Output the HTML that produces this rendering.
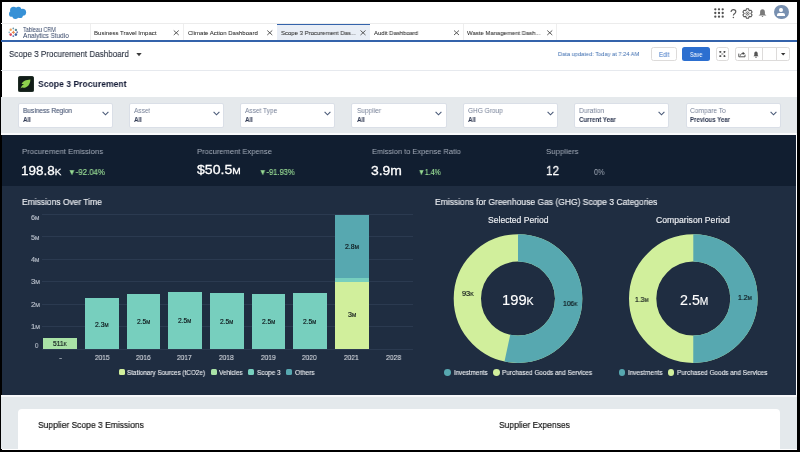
<!DOCTYPE html>
<html><head><meta charset="utf-8">
<style>
*{margin:0;padding:0;box-sizing:border-box}
html,body{width:800px;height:452px;overflow:hidden;background:#000;font-family:"Liberation Sans",sans-serif;line-height:1}
.a{position:absolute;white-space:nowrap}
.t{transform-origin:0 0;will-change:transform;-webkit-text-stroke-width:0.15px}
.xi{position:absolute;width:5px;height:5px}
.fb{position:absolute;top:102.8px;width:95.3px;height:25.4px;background:#fff;border:1px solid #dadfe7;border-radius:2px}
.fc{position:absolute;left:83px;top:7.3px}
.gl{position:absolute;left:41.5px;width:371px;height:1px;background:#2b3a50}
.bar{position:absolute;width:33.7px}
.sq{position:absolute;width:6.2px;height:6px;border-radius:1.5px}
.dot{position:absolute;width:6.8px;height:6.8px;border-radius:50%}
</style></head><body>
<div class="a" style="left:1.5px;top:1.5px;width:795.5px;height:448px;background:#fff"></div>

<!-- HEADER -->
<svg class="a" style="left:0;top:0" width="32" height="24" viewBox="0 0 32 24">
 <g fill="#3791d6"><circle cx="13.6" cy="10.3" r="3.5"/><circle cx="18.4" cy="9.7" r="2.9"/><circle cx="22.6" cy="12.3" r="3.5"/><circle cx="11.9" cy="13.9" r="2.9"/><circle cx="15.4" cy="15.9" r="3"/><circle cx="20" cy="15.2" r="2.9"/><rect x="12" y="10" width="10" height="6"/></g>
</svg>
<div class="a" style="left:1px;top:23px;width:796px;height:1px;background:#ececec"></div>
<svg class="a" style="left:713.8px;top:7.8px" width="10" height="10" viewBox="0 0 10 10"><g fill="#505050"><circle cx="1.3" cy="1.3" r="1.15"/><circle cx="5.0" cy="1.3" r="1.15"/><circle cx="8.7" cy="1.3" r="1.15"/><circle cx="1.3" cy="5.0" r="1.15"/><circle cx="5.0" cy="5.0" r="1.15"/><circle cx="8.7" cy="5.0" r="1.15"/><circle cx="1.3" cy="8.7" r="1.15"/><circle cx="5.0" cy="8.7" r="1.15"/><circle cx="8.7" cy="8.7" r="1.15"/></g></svg>
<svg class="a" style="left:729.5px;top:8.5px" width="7" height="10" viewBox="0 0 7 10"><path d="M1.1 2.9 C1.1 1.5 2.1 0.7 3.4 0.7 C4.8 0.7 5.8 1.6 5.8 2.8 C5.8 4 4.9 4.4 4.1 5 C3.6 5.4 3.4 5.8 3.4 6.6" stroke="#5c5c5c" stroke-width="1.2" fill="none"/><circle cx="3.4" cy="8.5" r="0.75" fill="#5c5c5c"/></svg>
<svg class="a" style="left:741.9px;top:7.5px" width="11" height="11" viewBox="0 0 11 11">
<path d="M4.50 0.80 L6.50 0.80 L7.15 2.64 L9.07 2.29 L10.07 4.02 L8.80 5.50 L10.07 6.98 L9.07 8.71 L7.15 8.36 L6.50 10.20 L4.50 10.20 L3.85 8.36 L1.93 8.71 L0.93 6.98 L2.20 5.50 L0.93 4.02 L1.93 2.29 L3.85 2.64 Z" fill="none" stroke="#5a5a5a" stroke-width="1.1" stroke-linejoin="round"/>
<circle cx="5.5" cy="5.5" r="1.6" fill="none" stroke="#5a5a5a" stroke-width="0.9"/><path d="M4.7 5.5 L6 4.8 L6 6.2 Z" fill="#5a5a5a"/></svg>
<svg class="a" style="left:757.7px;top:9px" width="9" height="8.5" viewBox="0 0 9 8.5"><path d="M4.5 0.3 C2.9 0.3 2.1 1.5 2.1 3.2 L2.1 5.2 L0.5 6.6 L8.5 6.6 L6.9 5.2 L6.9 3.2 C6.9 1.5 6.1 0.3 4.5 0.3 Z" fill="#7a7a7a"/><path d="M3.7 7 L5.3 7 C5.3 7.7 5 8 4.5 8 C4 8 3.7 7.7 3.7 7 Z" fill="#7a7a7a"/></svg>
<div class="a" style="left:774.2px;top:4.9px;width:14.6px;height:14.6px;border-radius:50%;background:#7890b0;overflow:hidden">
 <div class="a" style="left:5px;top:2.8px;width:4px;height:4.4px;border-radius:50%;background:#fff"></div>
 <div class="a" style="left:3.2px;top:7.8px;width:7.6px;height:3.2px;border-radius:2px 2px 0 0;background:#fff"></div>
</div>

<!-- TABS -->
<svg class="a" style="left:0;top:0" width="24" height="40" viewBox="0 0 24 40">
<path d="M13.4 30.3 L14 31.7 L15.4 32.3 L14 32.9 L13.4 34.3 L12.8 32.9 L11.4 32.3 L12.8 31.7 Z" fill="#e8894a"/>
<circle cx="13.4" cy="32.3" r="0.9" fill="#e8894a"/>
<circle cx="13.3" cy="28.4" r="0.85" fill="#6e98a8"/>
<circle cx="10.7" cy="29.8" r="1.2" fill="#eea35a"/>
<circle cx="15.9" cy="29.9" r="1.2" fill="#5e8c95"/>
<circle cx="9.2" cy="32.3" r="0.85" fill="#8fbccc"/>
<circle cx="17.2" cy="32.3" r="0.95" fill="#7a83b8"/>
<circle cx="10.7" cy="34.6" r="1.3" fill="#d9465e"/>
<circle cx="15.9" cy="34.6" r="1.3" fill="#3d5f9c"/>
<circle cx="13.3" cy="36.1" r="0.95" fill="#5a74b0"/>
</svg>
<div class="a" style="left:90px;top:24px;width:1px;height:16px;background:#eeeeee"></div>
<div class="a" style="left:183px;top:24px;width:1px;height:16px;background:#eeeeee"></div>
<div class="a" style="left:276.5px;top:24px;width:93.5px;height:16px;background:#e9eef6;border-top:1.7px solid #3463ab"></div>
<div class="a" style="left:463px;top:24px;width:1px;height:16px;background:#eeeeee"></div>
<div class="a" style="left:555.6px;top:24px;width:1px;height:16px;background:#eeeeee"></div>
<svg class="a" style="left:0;top:0" width="800" height="45">
 <g stroke="#4a4a4a" stroke-width="0.9" fill="none">
  <path d="M173.75 30.5 L178.75 35 M178.75 30.5 L173.75 35"/>
  <path d="M267.25 30.5 L272.25 35 M272.25 30.5 L267.25 35"/>
  <path d="M360.5 30.5 L365.5 35 M365.5 30.5 L360.5 35"/>
  <path d="M454 30.5 L459 35 M459 30.5 L454 35"/>
  <path d="M547.25 30.5 L552.25 35 M552.25 30.5 L547.25 35"/>
 </g>
</svg>
<div class="a" style="left:1px;top:40px;width:796px;height:2px;background:#3463ab"></div>

<!-- DASH HEADER -->
<svg class="a" style="left:135.5px;top:52.5px" width="6" height="4" viewBox="0 0 6 4"><path d="M0.3 0 L5.7 0 L3 3.3 Z" fill="#3c3c3c"/></svg>
<div class="a" style="left:651px;top:47px;width:25.5px;height:14px;border:1px solid #dddbda;border-radius:2.5px;background:#fff"></div>
<div class="a" style="left:682px;top:47px;width:27.5px;height:14px;border-radius:2.5px;background:#2c6fd0"></div>
<div class="a" style="left:715.5px;top:47px;width:13.5px;height:14px;border:1px solid #dddbda;border-radius:2.5px;background:#fff"></div>
<svg class="a" style="left:716px;top:48px" width="13" height="12" viewBox="0 0 13 12"><path d="M4 3.5 L8.8 8.5 M8.8 3.5 L4 8.5" stroke="#888" stroke-width="0.6"/>
<g fill="#2a2a2a"><path d="M3.4 3 L5.6 3.4 L3.8 5.2 Z"/><path d="M9.4 3 L7.2 3.4 L9 5.2 Z"/><path d="M3.4 9 L5.6 8.6 L3.8 6.8 Z"/><path d="M9.4 9 L7.2 8.6 L9 6.8 Z"/></g></svg>
<div class="a" style="left:735px;top:47px;width:55px;height:14px;border:1px solid #dddbda;border-radius:2.5px;background:#fff"></div>
<div class="a" style="left:747.7px;top:47px;width:1px;height:14px;background:#dddbda"></div>
<div class="a" style="left:761.5px;top:47px;width:1px;height:14px;background:#dddbda"></div>
<div class="a" style="left:776px;top:47px;width:1px;height:14px;background:#dddbda"></div>
<svg class="a" style="left:738px;top:51px" width="8" height="6.5" viewBox="0 0 8 6.5"><path d="M0.8 2.6 L0.8 5.8 L7 5.8 L7 3.6" stroke="#444" stroke-width="0.9" fill="none"/><path d="M2.4 4.6 C2.6 3.1 3.5 2.4 5 2.4" stroke="#444" stroke-width="0.9" fill="none"/><path d="M4.7 0.8 L7 2.4 L4.7 4 Z" fill="#444"/></svg>
<svg class="a" style="left:752.5px;top:50.5px" width="6" height="7" viewBox="0 0 6 7"><path d="M3 0.4 C1.7 0.4 1.3 1.5 1.3 2.6 L1.3 4.2 L0.4 5.3 L5.6 5.3 L4.7 4.2 L4.7 2.6 C4.7 1.5 4.3 0.4 3 0.4 Z" fill="#555"/><circle cx="3" cy="6.2" r="0.7" fill="#555"/></svg>
<svg class="a" style="left:781.3px;top:53px" width="4.4" height="3" viewBox="0 0 4.4 3"><path d="M0 0 L4.4 0 L2.2 2.6 Z" fill="#333"/></svg>
<div class="a" style="left:1px;top:70px;width:796px;height:1px;background:#e6e9ee"></div>

<!-- TITLE -->
<div class="a" style="left:17.5px;top:76px;width:16.3px;height:16px;border-radius:2.5px;background:#121d18;box-shadow:inset 0 0 0 0.6px #2a3a30"></div>
<svg class="a" style="left:0;top:0" width="40" height="96" viewBox="0 0 40 96"><path d="M30.4 79.4 C26.2 79.6 22.4 81.2 21.6 84.1 C22.5 83.8 23.4 83.9 23.8 84.3 C22.8 84.7 21.9 85.6 21.3 86.8 L20.5 88.4 L21.9 87.5 C26.2 88.4 30.2 85.6 30.4 79.4 Z" fill="#8fd14d"/></svg>

<!-- FILTER BAND -->
<div class="a" style="left:1px;top:96.5px;width:796px;height:37px;background:#e5e9ec"></div>
<div class="a" style="left:1px;top:133px;width:796px;height:2px;background:#fafbfc"></div>
<div class="fb" style="left:17.5px"><svg class="fc" width="7" height="5" viewBox="0 0 7 5"><path d="M0.6 0.8 L3.5 3.8 L6.4 0.8" stroke="#4a5a78" stroke-width="1.1" fill="none"/></svg></div>
<div class="fb" style="left:128.6px"><svg class="fc" width="7" height="5" viewBox="0 0 7 5"><path d="M0.6 0.8 L3.5 3.8 L6.4 0.8" stroke="#4a5a78" stroke-width="1.1" fill="none"/></svg></div>
<div class="fb" style="left:239.7px"><svg class="fc" width="7" height="5" viewBox="0 0 7 5"><path d="M0.6 0.8 L3.5 3.8 L6.4 0.8" stroke="#4a5a78" stroke-width="1.1" fill="none"/></svg></div>
<div class="fb" style="left:351.4px"><svg class="fc" width="7" height="5" viewBox="0 0 7 5"><path d="M0.6 0.8 L3.5 3.8 L6.4 0.8" stroke="#4a5a78" stroke-width="1.1" fill="none"/></svg></div>
<div class="fb" style="left:462.8px"><svg class="fc" width="7" height="5" viewBox="0 0 7 5"><path d="M0.6 0.8 L3.5 3.8 L6.4 0.8" stroke="#4a5a78" stroke-width="1.1" fill="none"/></svg></div>
<div class="fb" style="left:573.5px"><svg class="fc" width="7" height="5" viewBox="0 0 7 5"><path d="M0.6 0.8 L3.5 3.8 L6.4 0.8" stroke="#4a5a78" stroke-width="1.1" fill="none"/></svg></div>
<div class="fb" style="left:685.5px"><svg class="fc" width="7" height="5" viewBox="0 0 7 5"><path d="M0.6 0.8 L3.5 3.8 L6.4 0.8" stroke="#4a5a78" stroke-width="1.1" fill="none"/></svg></div>

<!-- KPI BAND -->
<div class="a" style="left:2px;top:135px;width:794px;height:50.5px;background:#111e30"></div>

<!-- CHART AREA -->
<div class="a" style="left:2px;top:185.5px;width:794px;height:209px;background:#1f2d41"></div>
<div class="gl" style="top:214px"></div>
<div class="gl" style="top:236px"></div>
<div class="gl" style="top:259px"></div>
<div class="gl" style="top:281px"></div>
<div class="gl" style="top:304px"></div>
<div class="gl" style="top:326px"></div>
<div class="gl" style="top:349px"></div>
<div class="bar" style="left:43.2px;top:337.8px;height:11.5px;background:#a9e2a6"></div>
<div class="bar" style="left:84.9px;top:298.1px;height:51.2px;background:#77cfbe"></div>
<div class="bar" style="left:126.6px;top:294px;height:55.3px;background:#77cfbe"></div>
<div class="bar" style="left:168.2px;top:292.4px;height:56.9px;background:#77cfbe"></div>
<div class="bar" style="left:209.9px;top:292.9px;height:56.4px;background:#77cfbe"></div>
<div class="bar" style="left:251.6px;top:294px;height:55.3px;background:#77cfbe"></div>
<div class="bar" style="left:293.2px;top:293.4px;height:55.9px;background:#77cfbe"></div>
<div class="bar" style="left:334.9px;top:215px;height:63.3px;background:#57a8b0"></div>
<div class="bar" style="left:334.9px;top:278.3px;height:3.5px;background:#77cfbe"></div>
<div class="bar" style="left:334.9px;top:281.8px;height:67.5px;background:#d1ef9c"></div>
<div class="sq" style="left:119px;top:368.9px;background:#d1ef9c"></div>
<div class="sq" style="left:211.2px;top:368.9px;background:#a9e2a6"></div>
<div class="sq" style="left:248.3px;top:368.9px;background:#77cfbe"></div>
<div class="sq" style="left:286px;top:368.9px;background:#57a8b0"></div>

<svg class="a" style="left:0;top:0" width="800" height="452">
 <g transform="translate(518,298.6) rotate(-90)">
  <circle r="50.65" fill="none" stroke="#d1ef9c" stroke-width="27.3"/>
  <circle r="50.65" fill="none" stroke="#57a8b0" stroke-width="27.3" stroke-dasharray="169.6 400"/>
 </g>
 <g transform="translate(693.3,298.6) rotate(-90)">
  <circle r="50.65" fill="none" stroke="#d1ef9c" stroke-width="27.3"/>
  <circle r="50.65" fill="none" stroke="#57a8b0" stroke-width="27.3" stroke-dasharray="158.9 400"/>
 </g>
</svg>
<div class="dot" style="left:444.4px;top:369.1px;background:#57a8b0"></div>
<div class="dot" style="left:492.9px;top:369.1px;background:#d1ef9c"></div>
<div class="dot" style="left:618.6px;top:369.1px;background:#57a8b0"></div>
<div class="dot" style="left:667.7px;top:369.1px;background:#d1ef9c"></div>

<!-- BOTTOM -->
<div class="a" style="left:1px;top:394.6px;width:796px;height:2.2px;background:#f7f8fa"></div>
<div class="a" style="left:1px;top:396.8px;width:796px;height:52.2px;background:#e4e9ec"></div>
<div class="a" style="left:18px;top:408.6px;width:762px;height:50px;background:#fff;border-radius:4px"></div>

<div class="a t" style="left:22.90px;top:26.70px;font-size:6.3px;transform:scaleX(0.858);color:#2e3f62;-webkit-text-stroke-width:0">Tableau CRM</div>
<div class="a t" style="left:22.80px;top:32.50px;font-size:6.6px;transform:scaleX(0.977);color:#2e3f62;-webkit-text-stroke-width:0">Analytics Studio</div>
<div class="a t" style="left:93.75px;top:29.90px;font-size:6.0px;transform:scaleX(1.008);color:#2a2a2a;-webkit-text-stroke-width:0.05px">Business Travel Impact</div>
<div class="a t" style="left:187.50px;top:29.90px;font-size:6.0px;transform:scaleX(1.006);color:#2a2a2a;-webkit-text-stroke-width:0.05px">Climate Action Dashboard</div>
<div class="a t" style="left:281.25px;top:29.90px;font-size:6.0px;transform:scaleX(0.993);color:#2a2a2a;-webkit-text-stroke-width:0.05px">Scope 3 Procurement Das...</div>
<div class="a t" style="left:374.40px;top:29.90px;font-size:6.0px;transform:scaleX(0.986);color:#2a2a2a;-webkit-text-stroke-width:0.05px">Audit Dashboard</div>
<div class="a t" style="left:467.25px;top:29.90px;font-size:6.0px;transform:scaleX(0.991);color:#2a2a2a;-webkit-text-stroke-width:0.05px">Waste Management Dash...</div>
<div class="a t" style="left:8.50px;top:49.80px;font-size:9px;transform:scaleX(0.898);color:#1e2636;-webkit-text-stroke-width:0.1px">Scope 3 Procurement Dashboard</div>
<div class="a t" style="left:557.75px;top:51.25px;font-size:6.2px;transform:scaleX(0.920);color:#3d6db0;-webkit-text-stroke-width:0">Data updated: Today at 7:24 AM</div>
<div class="a t" style="left:658.80px;top:52.00px;font-size:6.5px;transform:scaleX(0.927);color:#3b72c4;-webkit-text-stroke-width:0">Edit</div>
<div class="a t" style="left:689.50px;top:52.00px;font-size:6.5px;transform:scaleX(0.833);color:#fff;-webkit-text-stroke-width:0">Save</div>
<div class="a t" style="left:37.60px;top:78.75px;font-size:9.6px;transform:scaleX(0.897);font-weight:bold;color:#141b36;-webkit-text-stroke-width:0">Scope 3 Procurement</div>
<div class="a t" style="left:22.75px;top:107.40px;font-size:7.2px;transform:scaleX(0.908);color:#747f96;-webkit-text-stroke-width:0">Business Region</div>
<div class="a t" style="left:578.75px;top:107.30px;font-size:7.2px;transform:scaleX(0.924);color:#747f96;-webkit-text-stroke-width:0">Duration</div>
<div class="a t" style="left:690.00px;top:107.30px;font-size:7.2px;transform:scaleX(0.915);color:#747f96;-webkit-text-stroke-width:0">Compare To</div>
<div class="a t" style="left:578.75px;top:117.00px;font-size:6.8px;transform:scaleX(0.906);font-weight:bold;color:#2c3650;-webkit-text-stroke-width:0">Current Year</div>
<div class="a t" style="left:690.00px;top:117.00px;font-size:6.8px;transform:scaleX(0.891);font-weight:bold;color:#2c3650;-webkit-text-stroke-width:0">Previous Year</div>
<div class="a t" style="left:21.70px;top:147.50px;font-size:8.0px;transform:scaleX(0.960);color:#a6aebb;-webkit-text-stroke-width:0">Procurement Emissions</div>
<div class="a t" style="left:196.75px;top:147.50px;font-size:8.0px;transform:scaleX(0.946);color:#a6aebb;-webkit-text-stroke-width:0">Procurement Expense</div>
<div class="a t" style="left:371.70px;top:147.50px;font-size:8.0px;transform:scaleX(0.928);color:#a6aebb;-webkit-text-stroke-width:0">Emission to Expense Ratio</div>
<div class="a t" style="left:546.20px;top:147.50px;font-size:8.0px;transform:scaleX(0.976);color:#a6aebb;-webkit-text-stroke-width:0">Suppliers</div>
<div class="a t" style="left:21.40px;top:164.00px;font-size:13.5px;transform:scaleX(0.997);color:#fff;-webkit-text-stroke:0.3px #fff">198.8<span style="font-size:0.72em">K</span></div>
<div class="a t" style="left:196.75px;top:163.20px;font-size:13.5px;transform:scaleX(1.043);color:#fff;-webkit-text-stroke:0.3px #fff">$50.5<span style="font-size:0.72em">M</span></div>
<div class="a t" style="left:370.67px;top:164.00px;font-size:13.5px;transform:scaleX(1.029);color:#fff;-webkit-text-stroke:0.3px #fff">3.9m</div>
<div class="a t" style="left:545.63px;top:164.00px;font-size:13.5px;transform:scaleX(0.873);color:#fff;-webkit-text-stroke:0.3px #fff">12</div>
<div class="a t" style="left:67.71px;top:168.20px;font-size:8.3px;transform:scaleX(0.943);color:#98dc94">▼-92.04%</div>
<div class="a t" style="left:259.08px;top:168.20px;font-size:8.3px;transform:scaleX(0.911);color:#98dc94">▼-91.93%</div>
<div class="a t" style="left:417.93px;top:168.20px;font-size:8.3px;transform:scaleX(0.836);color:#98dc94">▼1.4%</div>
<div class="a t" style="left:594.10px;top:168.20px;font-size:8.3px;transform:scaleX(0.883);color:#a4acb9;-webkit-text-stroke-width:0">0%</div>
<div class="a t" style="left:22.00px;top:197.80px;font-size:8.7px;transform:scaleX(0.973);color:#eef0f4">Emissions Over Time</div>
<div class="a t" style="left:435.00px;top:197.75px;font-size:8.7px;transform:scaleX(0.978);color:#eef0f4">Emissions for Greenhouse Gas (GHG) Scope 3 Categories</div>
<div class="a t" style="left:488.00px;top:216.00px;font-size:8.3px;transform:scaleX(1.034);color:#eef0f4">Selected Period</div>
<div class="a t" style="left:656.25px;top:216.00px;font-size:8.3px;transform:scaleX(1.039);color:#eef0f4">Comparison Period</div>
<div class="a t" style="left:38.40px;top:420.00px;font-size:9.5px;transform:scaleX(0.895);color:#161616;-webkit-text-stroke:0.2px #161616">Supplier Scope 3 Emissions</div>
<div class="a t" style="left:499.00px;top:420.00px;font-size:9.5px;transform:scaleX(0.894);color:#161616;-webkit-text-stroke:0.2px #161616">Supplier Expenses</div>
<div class="a t" style="left:31.00px;top:215.20px;font-size:6.4px;transform:scaleX(1.143);color:#b8bfca">6<span style="font-size:0.72em">M</span></div>
<div class="a t" style="left:31.00px;top:234.60px;font-size:6.4px;transform:scaleX(1.143);color:#b8bfca">5<span style="font-size:0.72em">M</span></div>
<div class="a t" style="left:31.00px;top:256.90px;font-size:6.4px;transform:scaleX(1.143);color:#b8bfca">4<span style="font-size:0.72em">M</span></div>
<div class="a t" style="left:30.60px;top:279.40px;font-size:6.4px;transform:scaleX(1.214);color:#b8bfca">3<span style="font-size:0.72em">M</span></div>
<div class="a t" style="left:30.60px;top:301.90px;font-size:6.4px;transform:scaleX(1.214);color:#b8bfca">2<span style="font-size:0.72em">M</span></div>
<div class="a t" style="left:30.60px;top:323.90px;font-size:6.4px;transform:scaleX(1.214);color:#b8bfca">1<span style="font-size:0.72em">M</span></div>
<div class="a t" style="left:35.20px;top:343.40px;font-size:6.4px;transform:scaleX(0.900);color:#b8bfca">0</div>
<div class="a t" style="left:53.30px;top:340.90px;font-size:6.7px;transform:scaleX(0.979);color:#0b1216">511<span style="font-size:0.72em">K</span></div>
<div class="a t" style="left:95.00px;top:321.60px;font-size:6.7px;transform:scaleX(1.015);color:#0b1216">2.3<span style="font-size:0.72em">M</span></div>
<div class="a t" style="left:136.70px;top:319.30px;font-size:6.7px;transform:scaleX(1.000);color:#0b1216">2.5<span style="font-size:0.72em">M</span></div>
<div class="a t" style="left:178.30px;top:318.40px;font-size:6.7px;transform:scaleX(1.000);color:#0b1216">2.5<span style="font-size:0.72em">M</span></div>
<div class="a t" style="left:220.00px;top:318.70px;font-size:6.7px;transform:scaleX(1.000);color:#0b1216">2.5<span style="font-size:0.72em">M</span></div>
<div class="a t" style="left:261.70px;top:319.20px;font-size:6.7px;transform:scaleX(1.000);color:#0b1216">2.5<span style="font-size:0.72em">M</span></div>
<div class="a t" style="left:303.40px;top:318.90px;font-size:6.7px;transform:scaleX(1.000);color:#0b1216">2.5<span style="font-size:0.72em">M</span></div>
<div class="a t" style="left:345.00px;top:244.00px;font-size:6.7px;transform:scaleX(1.038);color:#0b1216">2.8<span style="font-size:0.72em">M</span></div>
<div class="a t" style="left:347.50px;top:312.40px;font-size:6.7px;transform:scaleX(1.062);color:#0b1216">3<span style="font-size:0.72em">M</span></div>
<div class="a t" style="left:59.00px;top:353.80px;font-size:7.6px;transform:scaleX(1.250);color:#d2d6dd">-</div>
<div class="a t" style="left:94.70px;top:353.60px;font-size:7.6px;transform:scaleX(0.856);color:#d2d6dd">2015</div>
<div class="a t" style="left:135.80px;top:353.60px;font-size:7.6px;transform:scaleX(0.865);color:#d2d6dd">2016</div>
<div class="a t" style="left:177.40px;top:353.60px;font-size:7.6px;transform:scaleX(0.865);color:#d2d6dd">2017</div>
<div class="a t" style="left:219.10px;top:353.60px;font-size:7.6px;transform:scaleX(0.865);color:#d2d6dd">2018</div>
<div class="a t" style="left:260.70px;top:353.60px;font-size:7.6px;transform:scaleX(0.865);color:#d2d6dd">2019</div>
<div class="a t" style="left:302.40px;top:353.60px;font-size:7.6px;transform:scaleX(0.865);color:#d2d6dd">2020</div>
<div class="a t" style="left:344.00px;top:353.60px;font-size:7.6px;transform:scaleX(0.865);color:#d2d6dd">2021</div>
<div class="a t" style="left:385.50px;top:353.60px;font-size:7.6px;transform:scaleX(0.894);color:#d2d6dd">2028</div>
<div class="a t" style="left:127.30px;top:368.70px;font-size:7.0px;transform:scaleX(0.908);color:#eef0f3;-webkit-text-stroke:0.1px #eef0f3">Stationary Sources (tCO2e)</div>
<div class="a t" style="left:219.20px;top:368.70px;font-size:7.0px;transform:scaleX(0.908);color:#eef0f3;-webkit-text-stroke:0.1px #eef0f3">Vehicles</div>
<div class="a t" style="left:256.60px;top:368.70px;font-size:7.0px;transform:scaleX(0.919);color:#eef0f3;-webkit-text-stroke:0.1px #eef0f3">Scope 3</div>
<div class="a t" style="left:294.80px;top:368.70px;font-size:7.0px;transform:scaleX(0.929);color:#eef0f3;-webkit-text-stroke:0.1px #eef0f3">Others</div>
<div class="a t" style="left:454.30px;top:368.50px;font-size:7.0px;transform:scaleX(0.889);color:#eef0f3;-webkit-text-stroke:0.1px #eef0f3">Investments</div>
<div class="a t" style="left:502.00px;top:368.50px;font-size:7.0px;transform:scaleX(0.915);color:#eef0f3;-webkit-text-stroke:0.1px #eef0f3">Purchased Goods and Services</div>
<div class="a t" style="left:628.30px;top:368.50px;font-size:7.0px;transform:scaleX(0.916);color:#eef0f3;-webkit-text-stroke:0.1px #eef0f3">Investments</div>
<div class="a t" style="left:677.00px;top:368.50px;font-size:7.0px;transform:scaleX(0.918);color:#eef0f3;-webkit-text-stroke:0.1px #eef0f3">Purchased Goods and Services</div>
<div class="a t" style="left:502.45px;top:292.70px;font-size:14px;transform:scaleX(1.052);color:#fff">199<span style="font-size:0.72em">K</span></div>
<div class="a t" style="left:679.50px;top:292.70px;font-size:14px;transform:scaleX(1.019);color:#fff">2.5<span style="font-size:0.72em">M</span></div>
<div class="a t" style="left:461.60px;top:290.20px;font-size:7.0px;transform:scaleX(1.055);color:#0b1216">93<span style="font-size:0.72em">K</span></div>
<div class="a t" style="left:562.50px;top:300.35px;font-size:7.0px;transform:scaleX(0.960);color:#0b1216">106<span style="font-size:0.72em">K</span></div>
<div class="a t" style="left:635.30px;top:295.65px;font-size:7.0px;transform:scaleX(0.964);color:#0b1216">1.3<span style="font-size:0.72em">M</span></div>
<div class="a t" style="left:737.80px;top:294.30px;font-size:7.0px;transform:scaleX(0.979);color:#0b1216">1.2<span style="font-size:0.72em">M</span></div>
<div class="a t" style="left:22.75px;top:107.40px;font-size:7.2px;transform:scaleX(0.908);color:#747f96;-webkit-text-stroke-width:0">Business Region</div>
<div class="a t" style="left:22.75px;top:117.00px;font-size:6.8px;transform:scaleX(0.906);font-weight:bold;color:#2c3650;-webkit-text-stroke-width:0">All</div>
<div class="a t" style="left:133.85px;top:107.40px;font-size:7.2px;transform:scaleX(0.908);color:#747f96;-webkit-text-stroke-width:0">Asset</div>
<div class="a t" style="left:133.85px;top:117.00px;font-size:6.8px;transform:scaleX(0.906);font-weight:bold;color:#2c3650;-webkit-text-stroke-width:0">All</div>
<div class="a t" style="left:244.95px;top:107.40px;font-size:7.2px;transform:scaleX(0.908);color:#747f96;-webkit-text-stroke-width:0">Asset Type</div>
<div class="a t" style="left:244.95px;top:117.00px;font-size:6.8px;transform:scaleX(0.906);font-weight:bold;color:#2c3650;-webkit-text-stroke-width:0">All</div>
<div class="a t" style="left:356.65px;top:107.40px;font-size:7.2px;transform:scaleX(0.908);color:#747f96;-webkit-text-stroke-width:0">Supplier</div>
<div class="a t" style="left:356.65px;top:117.00px;font-size:6.8px;transform:scaleX(0.906);font-weight:bold;color:#2c3650;-webkit-text-stroke-width:0">All</div>
<div class="a t" style="left:468.05px;top:107.40px;font-size:7.2px;transform:scaleX(0.908);color:#747f96;-webkit-text-stroke-width:0">GHG Group</div>
<div class="a t" style="left:468.05px;top:117.00px;font-size:6.8px;transform:scaleX(0.906);font-weight:bold;color:#2c3650;-webkit-text-stroke-width:0">All</div>

<!-- frame -->
<div class="a" style="left:0;top:449.5px;width:800px;height:3px;background:#000"></div>
<div class="a" style="left:797px;top:0;width:3px;height:452px;background:#000"></div>
</body></html>
